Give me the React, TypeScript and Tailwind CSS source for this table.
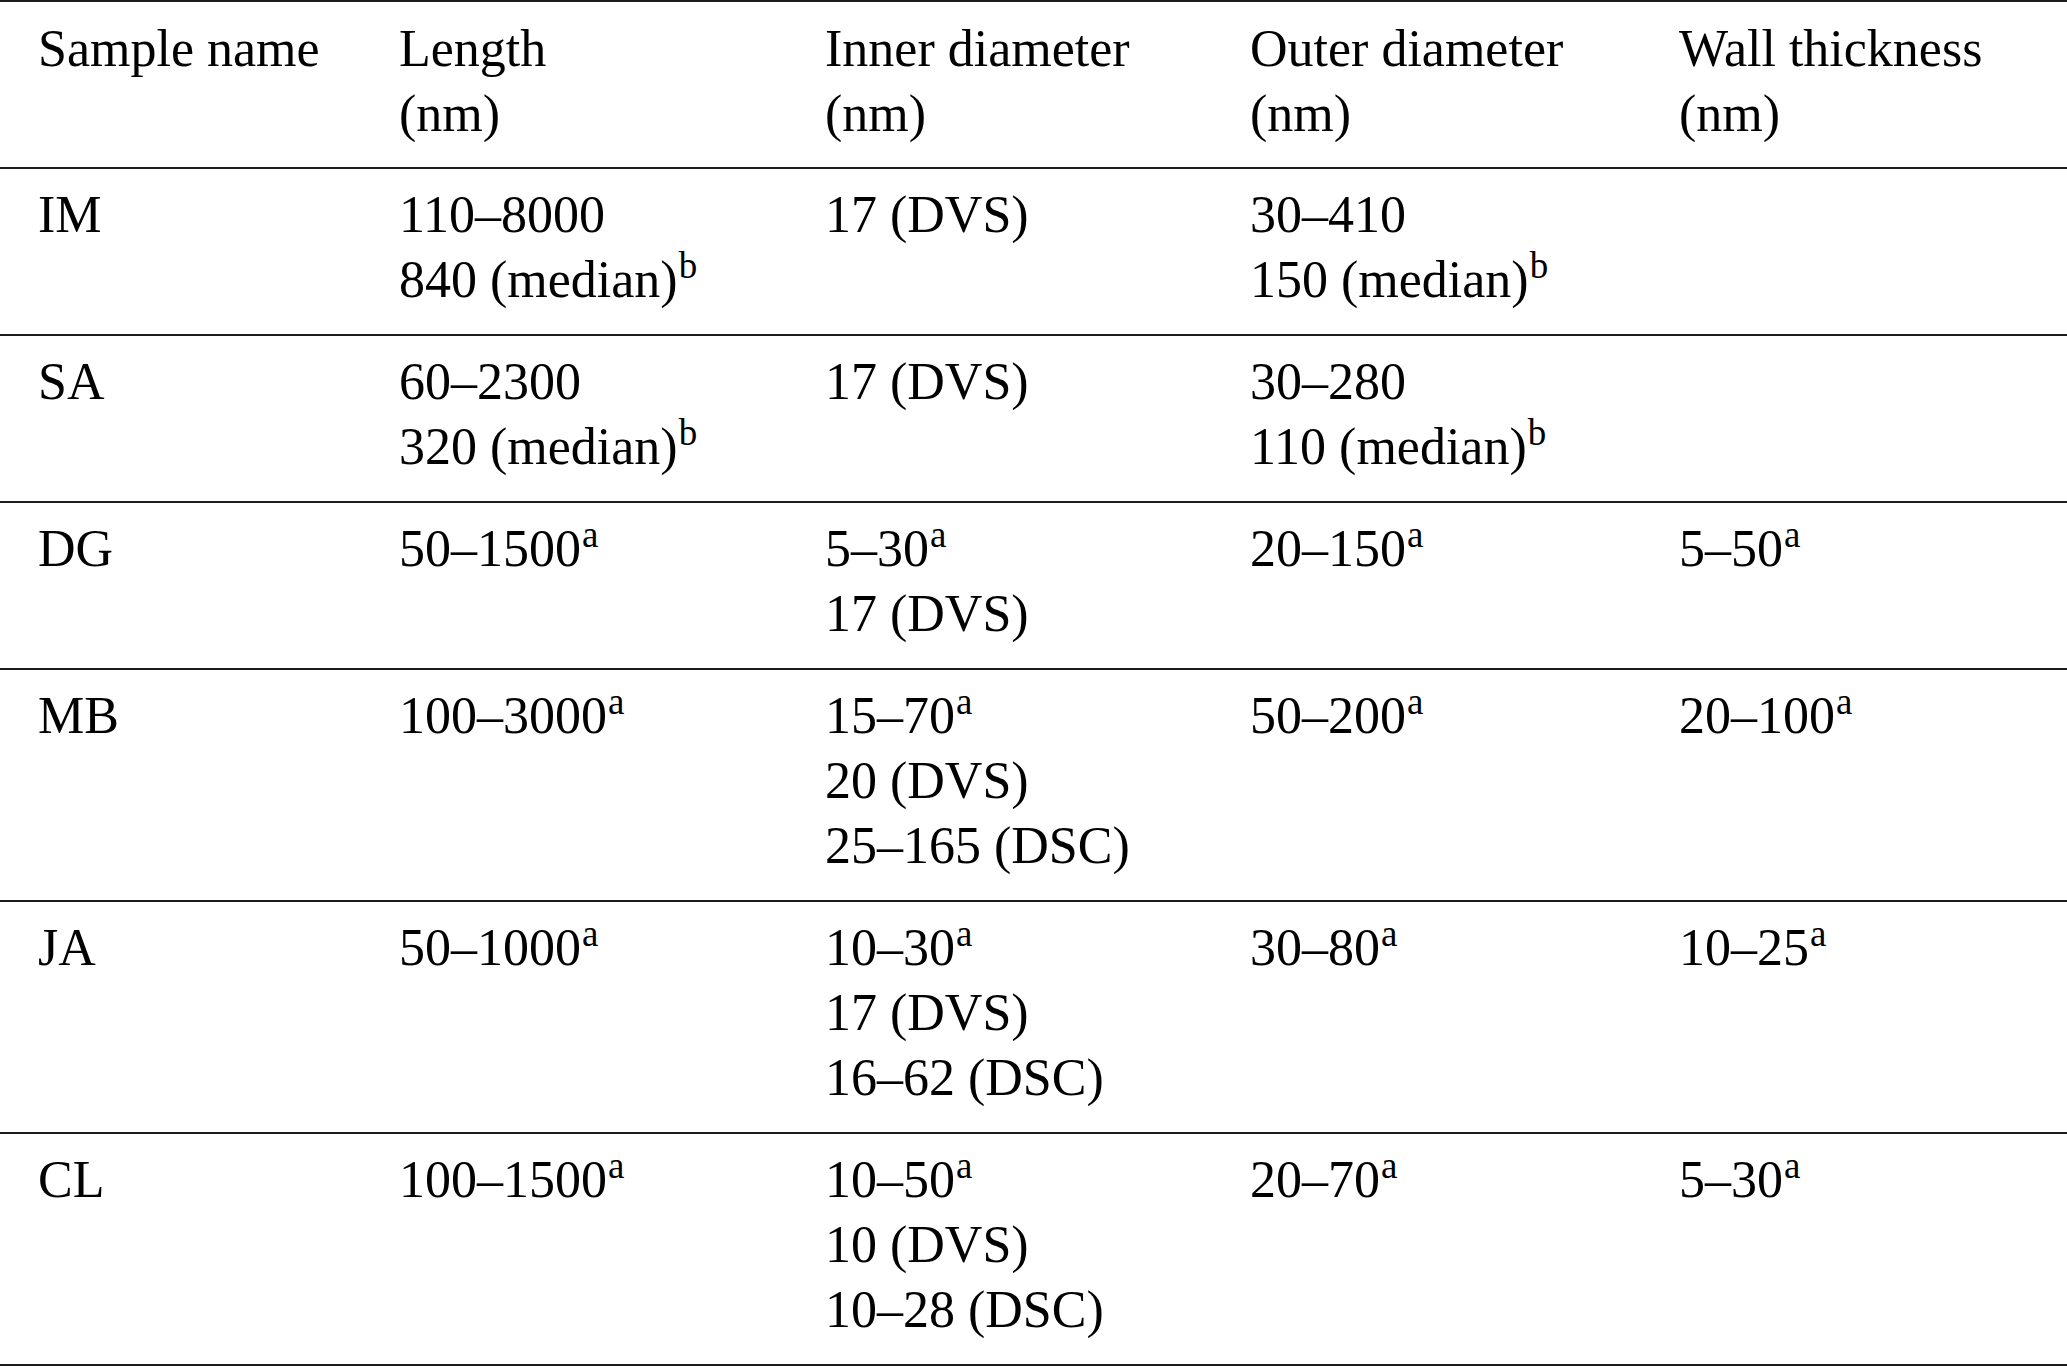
import React from "react";

type Line = { t: string; sup?: string };
type Row = { name: string; cells: Line[][] };

const header: Line[][] = [
  [{ t: "Sample name" }],
  [{ t: "Length" }, { t: "(nm)" }],
  [{ t: "Inner diameter" }, { t: "(nm)" }],
  [{ t: "Outer diameter" }, { t: "(nm)" }],
  [{ t: "Wall thickness" }, { t: "(nm)" }],
];

const rows: Row[] = [
  {
    name: "IM",
    cells: [
      [{ t: "110–8000" }, { t: "840 (median)", sup: "b" }],
      [{ t: "17 (DVS)" }],
      [{ t: "30–410" }, { t: "150 (median)", sup: "b" }],
      [],
    ],
  },
  {
    name: "SA",
    cells: [
      [{ t: "60–2300" }, { t: "320 (median)", sup: "b" }],
      [{ t: "17 (DVS)" }],
      [{ t: "30–280" }, { t: "110 (median)", sup: "b" }],
      [],
    ],
  },
  {
    name: "DG",
    cells: [
      [{ t: "50–1500", sup: "a" }],
      [{ t: "5–30", sup: "a" }, { t: "17 (DVS)" }],
      [{ t: "20–150", sup: "a" }],
      [{ t: "5–50", sup: "a" }],
    ],
  },
  {
    name: "MB",
    cells: [
      [{ t: "100–3000", sup: "a" }],
      [{ t: "15–70", sup: "a" }, { t: "20 (DVS)" }, { t: "25–165 (DSC)" }],
      [{ t: "50–200", sup: "a" }],
      [{ t: "20–100", sup: "a" }],
    ],
  },
  {
    name: "JA",
    cells: [
      [{ t: "50–1000", sup: "a" }],
      [{ t: "10–30", sup: "a" }, { t: "17 (DVS)" }, { t: "16–62 (DSC)" }],
      [{ t: "30–80", sup: "a" }],
      [{ t: "10–25", sup: "a" }],
    ],
  },
  {
    name: "CL",
    cells: [
      [{ t: "100–1500", sup: "a" }],
      [{ t: "10–50", sup: "a" }, { t: "10 (DVS)" }, { t: "10–28 (DSC)" }],
      [{ t: "20–70", sup: "a" }],
      [{ t: "5–30", sup: "a" }],
    ],
  },
];

const Cell = ({ lines, first }: { lines: Line[]; first?: boolean }) => (
  <div className={first ? "pl-[38px]" : ""}>
    {lines.map((l, i) => (
      <div key={i} className="whitespace-nowrap">
        {l.t}
        {l.sup && (
          <span className="relative -top-[19px] ml-[1px] text-[37px] leading-none">{l.sup}</span>
        )}
      </div>
    ))}
  </div>
);

const TableRow = ({ cells, last, head }: { cells: Line[][]; last?: boolean; head?: boolean }) => (
  <div
    className={
      "grid grid-cols-[399px_426px_425px_429px_1fr] border-t-2 border-[#1c1c1c] " +
      (head ? "pt-[14px] pb-[21px] " : "pt-[13px] pb-[22px] ") +
      (last ? "border-b-2" : "")
    }
  >
    {cells.map((c, i) => (
      <Cell key={i} lines={c} first={i === 0} />
    ))}
  </div>
);

export default function App() {
  return (
    <div className="w-[2067px] h-[1368px] bg-white text-black font-['Liberation_Serif','Times_New_Roman',serif] text-[52px] leading-[65px]">
      <TableRow cells={header} head />
      {rows.map((r, i) => (
        <TableRow key={r.name} cells={[[{ t: r.name }], ...r.cells]} last={i === rows.length - 1} />
      ))}
    </div>
  );
}
